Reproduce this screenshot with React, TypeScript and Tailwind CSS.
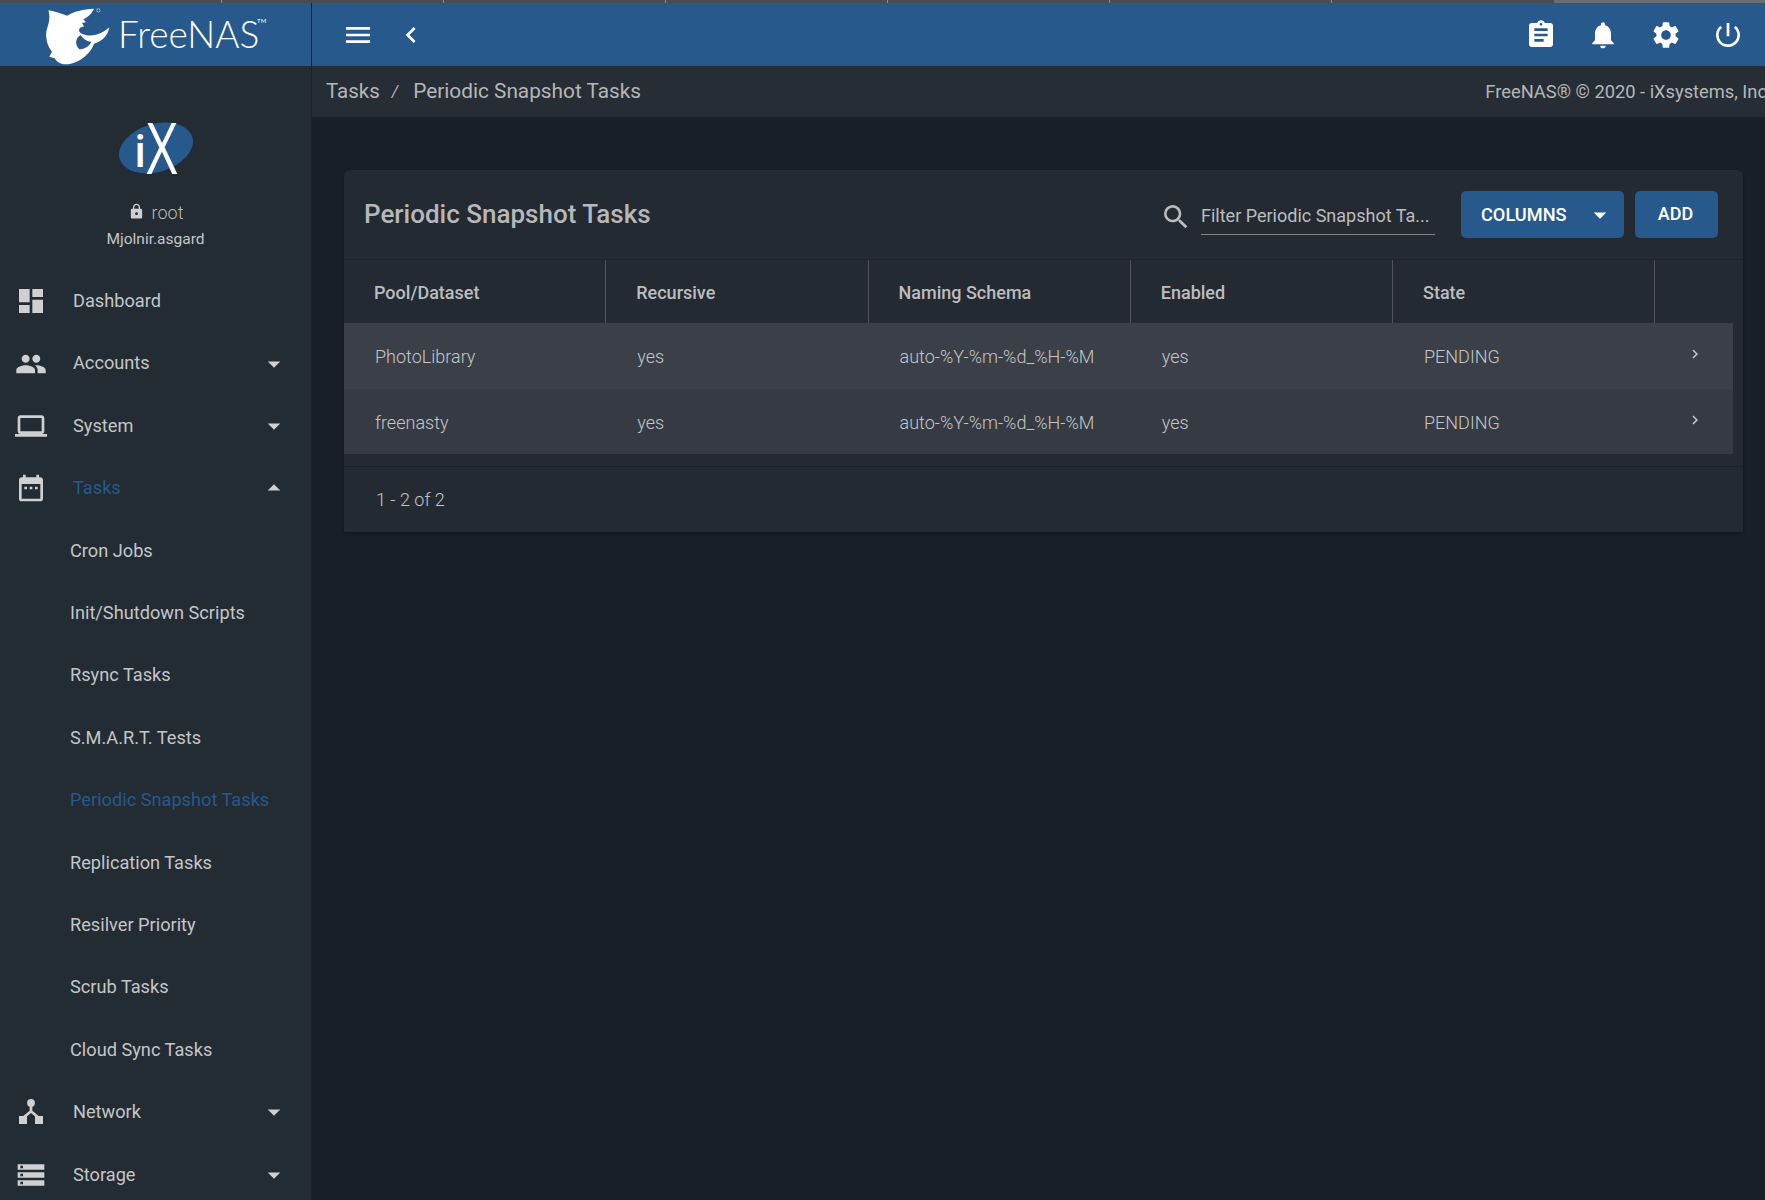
import React from "react";
import {
  MdDashboard, MdPeople, MdLaptop, MdDateRange, MdStorage, MdArrowDropDown, MdArrowDropUp,
  MdMenu, MdChevronLeft, MdChevronRight, MdAssignment, MdNotifications, MdSettings,
  MdPowerSettingsNew, MdLock, MdSearch,
} from "react-icons/md";

function NetworkIcon({ className }: { className?: string }) {
  return (
    <svg viewBox="0 0 24 24" className={className} fill="currentColor">
      <circle cx="12" cy="5.2" r="2.9" />
      <path d="M11 7h2v4l5 4.2-1.3 1.5L12 12.8l-4.7 3.9L6 15.2l5-4.2z" />
      <rect x="3" y="15" width="6" height="6" />
      <rect x="15" y="15" width="6" height="6" />
    </svg>
  );
}

function Shark() {
  return (
    <svg viewBox="0 0 240 180" className="h-[60px] w-[80px] shrink-0" fill="white">
      <path
        fillRule="evenodd"
        d="M25 16 C45 20 62 25 82 32 C100 20 130 12 162 11 C156 24 148 34 130 43 L138 52 L126 54 L132 64 L120 68 C114 76 118 84 130 88 C150 96 180 92 208 67 C204 90 190 108 162 116 C152 145 118 176 78 178 C62 178 52 172 44 160 L28 155 L36 140 C20 120 14 90 22 68 C26 55 32 40 25 16 Z M122 90 C108 98 102 116 118 133 C134 132 148 124 154 110 C140 110 130 102 122 90 Z"
      />
      <circle cx="175" cy="16" r="5" fill="none" stroke="white" strokeWidth="1.5" />
    </svg>
  );
}

function IxLogo() {
  return (
    <svg viewBox="0 -26 74 102" className="-mb-[24px] -mt-[26px] h-[102px] w-[74px]">
      <ellipse cx="37" cy="27" rx="38" ry="24" transform="rotate(-17 37 27)" fill="#27598c" />
      <text x="15" y="46" fontFamily="'Open Sans', sans-serif" fontWeight="600" fontSize="44" fill="white">i</text>
      <text x="27.5" y="53" fontFamily="'Open Sans', sans-serif" fontWeight="400" fontSize="72" fill="white" textLength="31" lengthAdjust="spacingAndGlyphs">X</text>
    </svg>
  );
}

const subItems = [
  "Cron Jobs",
  "Init/Shutdown Scripts",
  "Rsync Tasks",
  "S.M.A.R.T. Tests",
  "Periodic Snapshot Tasks",
  "Replication Tasks",
  "Resilver Priority",
  "Scrub Tasks",
  "Cloud Sync Tasks",
];

function NavRow({
  icon,
  label,
  caret,
  active,
}: {
  icon: React.ReactNode;
  label: string;
  caret?: "down" | "up";
  active?: boolean;
}) {
  return (
    <div className="flex h-[62.4px] shrink-0 items-center">
      <div className="flex w-[73px] shrink-0 items-center pl-[15px] text-[#cfd0d2]">{icon}</div>
      <span className={active ? "-mt-[1px] text-[18.2px] text-[#27598c]" : "-mt-[1px] text-[18.2px] text-[#c4c6c8]"}>{label}</span>
      {caret === "down" && <MdArrowDropDown className="ml-auto mr-[22px] h-[30px] w-[30px] text-[#cfd0d2]" />}
      {caret === "up" && <MdArrowDropUp className="ml-auto mr-[22px] h-[30px] w-[30px] text-[#cfd0d2]" />}
    </div>
  );
}

const rows = [
  { name: "PhotoLibrary", bg: "bg-[#3b4048]" },
  { name: "freenasty", bg: "bg-[#363b43]" },
];

export default function App() {
  const iconCls = "h-[32px] w-[32px]";
  return (
    <div className="flex h-[1200px] w-full flex-col overflow-hidden bg-[#181f28] font-['Roboto',sans-serif]">
      {/* browser tab strip */}
      <div className="flex h-[3px] shrink-0 bg-[#494c50]">
        {[0, 1, 2, 3, 4, 5].map((i) => (
          <div key={i} className="h-full w-[222px] shrink-0 border-r border-[#8b8e92]" />
        ))}
        <div className="h-full w-[222px] shrink-0 bg-[#494c50]" />
        <div className="h-full flex-1 bg-[#6b6d70]" />
      </div>

      <div className="flex min-h-0 flex-1">
        {/* Sidebar */}
        <aside className="flex w-[311px] shrink-0 flex-col overflow-hidden bg-[#232b33]">
          <div className="flex h-[63px] shrink-0 items-center bg-[#27598c] pl-[40px]">
            <Shark />
            <span className="relative -ml-[2px] -mt-[3px] font-['Lato',sans-serif] text-[37px] font-light leading-none text-white">
              FreeNAS
              <span className="absolute -right-[7px] top-[3px] text-[6px] font-normal">TM</span>
            </span>
          </div>
          <div className="flex h-[204px] shrink-0 flex-col items-center pt-[55px]">
            <IxLogo />
            <div className="mt-[28px] flex h-[24px] items-center text-[18px] leading-none text-[#bcbdbf]">
              <MdLock className="-mt-[3px] mr-[7px] h-[17px] w-[17px] text-[#d0d0d0]" />
              <span className="font-light">root</span>
            </div>
            <div className="mt-[3px] text-[15.5px] leading-[22px] text-[#c4c6c8]">Mjolnir.asgard</div>
          </div>
          <NavRow icon={<MdDashboard className={iconCls} />} label="Dashboard" />
          <NavRow icon={<MdPeople className={iconCls} />} label="Accounts" caret="down" />
          <NavRow icon={<MdLaptop className={iconCls} />} label="System" caret="down" />
          <NavRow icon={<MdDateRange className={iconCls} />} label="Tasks" caret="up" active />
          {subItems.map((s) => (
            <div key={s} className="flex h-[62.4px] shrink-0 items-center pl-[70px]">
              <span className={s === "Periodic Snapshot Tasks" ? "-mt-[1px] text-[18.2px] text-[#27598c]" : "-mt-[1px] text-[18.2px] text-[#c4c6c8]"}>{s}</span>
            </div>
          ))}
          <NavRow icon={<NetworkIcon className={iconCls} />} label="Network" caret="down" />
          <NavRow icon={<MdStorage className={iconCls} />} label="Storage" caret="down" />
        </aside>

        {/* Main */}
        <div className="flex min-w-0 flex-1 flex-col border-l border-[#1a2129]">
          <header className="flex h-[63px] shrink-0 items-center bg-[#27598c] text-white">
            <MdMenu className="ml-[30px] h-[32px] w-[32px]" />
            <MdChevronLeft className="ml-[21px] h-[32px] w-[32px]" />
            <div className="ml-auto flex items-center gap-[30.5px] pr-[21px]">
              <MdAssignment className="h-[32px] w-[32px]" />
              <MdNotifications className="h-[32px] w-[32px]" />
              <MdSettings className="h-[32px] w-[32px]" />
              <MdPowerSettingsNew className="h-[32px] w-[32px]" />
            </div>
          </header>

          <div className="flex h-[51px] shrink-0 items-center overflow-hidden whitespace-nowrap bg-[#262d34] pl-[14px] text-[#b5b7b9]">
            <span className="text-[20.5px]">Tasks</span>
            <span className="ml-[12px] text-[16px] italic">/</span>
            <span className="ml-[15px] text-[20.8px]">Periodic Snapshot Tasks</span>
            <span className="ml-auto shrink-0 translate-x-[2px] text-[18.3px]">FreeNAS® © 2020 - iXsystems, Inc</span>
          </div>

          <main className="min-h-0 flex-1 pl-[32px] pr-[22px] pt-[53px]">
            <section className="rounded-t-[6px] bg-[#232a32] text-[#bcbdbf] shadow-[0_1px_3px_rgba(0,0,0,0.3)]">
              <div className="flex h-[90px] items-center border-b border-[#1d242b] pl-[20px]">
                <h1 className="text-[26px] font-medium text-[#b6b8ba]">Periodic Snapshot Tasks</h1>
                <div className="ml-auto flex items-center">
                  <MdSearch className="mt-[5px] h-[32px] w-[32px] text-[#bcbdbf]" />
                  <div className="ml-[9px] flex h-[40px] w-[234px] items-center border-b border-[#7f8286] pt-[2px] text-[18px] text-[#bcbdbf]">
                    Filter Periodic Snapshot Ta...
                  </div>
                  <button className="ml-[26px] flex h-[47px] w-[163px] items-center rounded-[5px] bg-[#27598c] pl-[20px] text-[18.2px] font-medium text-white">
                    COLUMNS
                    <MdArrowDropDown className="ml-[18px] h-[30px] w-[30px]" />
                  </button>
                  <button className="ml-[11px] mr-[25px] h-[47px] w-[83px] rounded-[5px] bg-[#27598c] pb-[2px] pr-[2px] text-[18px] font-medium text-white">
                    ADD
                  </button>
                </div>
              </div>

              <div className="grid h-[63px] grid-cols-[repeat(5,262.25px)_1fr] items-stretch">
                {["Pool/Dataset", "Recursive", "Naming Schema", "Enabled", "State", ""].map((h, i) => (
                  <div key={i} className={i < 5 ? "flex items-center border-r border-[#50555b] pl-[30px] pt-[2px] text-[18px] font-medium" : "flex items-center"}>
                    {h}
                  </div>
                ))}
              </div>

              <div className="mr-[10px]">
                {rows.map((r) => (
                  <div key={r.name} className={`grid h-[65.5px] grid-cols-[repeat(5,262.25px)_1fr] items-center pt-[2px] text-[18px] font-light text-[#c4c6c8] ${r.bg}`}>
                    <div className="pl-[31px]">{r.name}</div>
                    <div className="pl-[31px]">yes</div>
                    <div className="pl-[31px]">auto-%Y-%m-%d_%H-%M</div>
                    <div className="pl-[31px]">yes</div>
                    <div className="pl-[31px]">PENDING</div>
                    <div className="pl-[31px]">
                      <MdChevronRight className="-mt-[5px] h-[18px] w-[18px]" />
                    </div>
                  </div>
                ))}
              </div>

              <div className="h-[13px] border-b border-[#1b2229]" />
              <div className="flex h-[65px] items-center pl-[32px] text-[18px] font-light text-[#c4c6c8]">1 - 2 of 2</div>
            </section>
          </main>
        </div>
      </div>
    </div>
  );
}
